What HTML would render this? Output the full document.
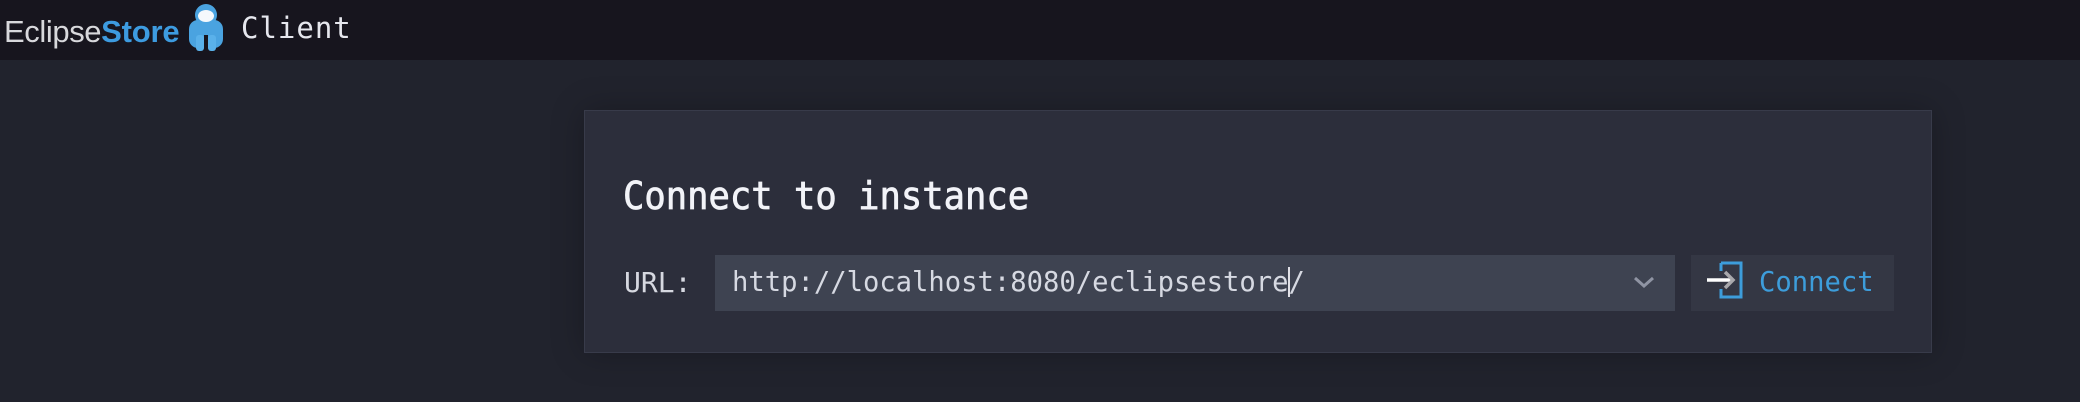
<!DOCTYPE html>
<html><head><meta charset="utf-8"><style>
html,body{margin:0;padding:0;width:2080px;height:402px;overflow:hidden;background:#21232d;font-family:"DejaVu Sans Mono","Liberation Mono",monospace;}
.hdr{position:absolute;left:0;top:0;width:2080px;height:60px;background:#17151e;}
.logo{position:absolute;left:4px;top:13px;font-family:"Liberation Sans",sans-serif;font-size:31px;line-height:38px;letter-spacing:-0.4px;}
.logo .e{color:#d8d8dc;}
.logo .s{color:#3d9be0;font-weight:bold;letter-spacing:-0.2px;}
.client{position:absolute;left:241px;top:10px;font-size:29px;line-height:36px;color:#e6e7ee;letter-spacing:1px;}
.panel{position:absolute;left:584px;top:110px;width:1346px;height:241px;background:#2c2e3b;border:1px solid #383b4a;box-shadow:0 0 30px rgba(0,0,0,0.25);}
.title{position:absolute;left:623px;top:177px;font-size:35.5px;line-height:42px;color:#f2f3f8;-webkit-text-stroke:0.7px #f2f3f8;transform:scaleY(1.08);transform-origin:0 80%;}
.lbl{position:absolute;left:624px;top:266px;font-size:28px;line-height:34px;color:#d6d8e0;}
.inp{position:absolute;left:715px;top:255px;width:960px;height:56px;background:#3e4351;}
.url{position:absolute;left:17px;top:11px;font-size:27.2px;line-height:34px;color:#d6d9e2;white-space:pre;}
.cur{display:inline-block;width:2px;height:30px;background:#e0e0e6;vertical-align:-6px;margin:0 -1px;}
.chev{position:absolute;right:20px;top:20px;}
.btn{position:absolute;left:1691px;top:255px;width:203px;height:56px;background:#343744;}
.btn svg{position:absolute;left:16px;top:6px;}
.btn span{position:absolute;left:68px;top:11px;font-size:27.2px;line-height:34px;color:#3d9ddb;}
</style></head><body>
<div class="hdr">
 <div class="logo"><span class="e">Eclipse</span><span class="s">Store</span></div>
 <svg style="position:absolute;left:185px;top:3px" width="42" height="50" viewBox="0 0 42 50">
  <rect x="4" y="17" width="34" height="28" rx="9" fill="#4aa3e0"/>
  <rect x="11" y="32" width="8" height="16" rx="3" fill="#5ab1ea"/>
  <rect x="23" y="32" width="8" height="16" rx="3" fill="#5ab1ea"/>
  <rect x="19" y="32" width="4" height="16" fill="#17151e"/>
  <circle cx="21" cy="12" r="11" fill="#4aa3e0"/>
  <ellipse cx="21" cy="13" rx="8" ry="6" fill="#f4f8fc"/>
 </svg>
 <div class="client">Client</div>
</div>
<div class="panel"></div>
<div class="title">Connect to instance</div>
<div class="lbl">URL:</div>
<div class="inp"><div class="url">http://localhost:8080/eclipsestore<span class="cur"></span>/</div>
 <svg class="chev" width="22" height="14" viewBox="0 0 22 14"><path d="M2 3 L11 11 L20 3" fill="none" stroke="#8f94a3" stroke-width="3"/></svg>
</div>
<div class="btn">
 <svg width="40" height="44" viewBox="0 0 40 44"><path d="M14 2 H34 V36 H14 V28 M14 10 V2" fill="none" stroke="#3d9ddb" stroke-width="3"/><path d="M0 19 H24" stroke="#ffffff" stroke-width="3.5"/><path d="M18 11 L26 19 L18 27" fill="none" stroke="#a8a8ac" stroke-width="3.5"/></svg>
 <span>Connect</span>
</div>
</body></html>
